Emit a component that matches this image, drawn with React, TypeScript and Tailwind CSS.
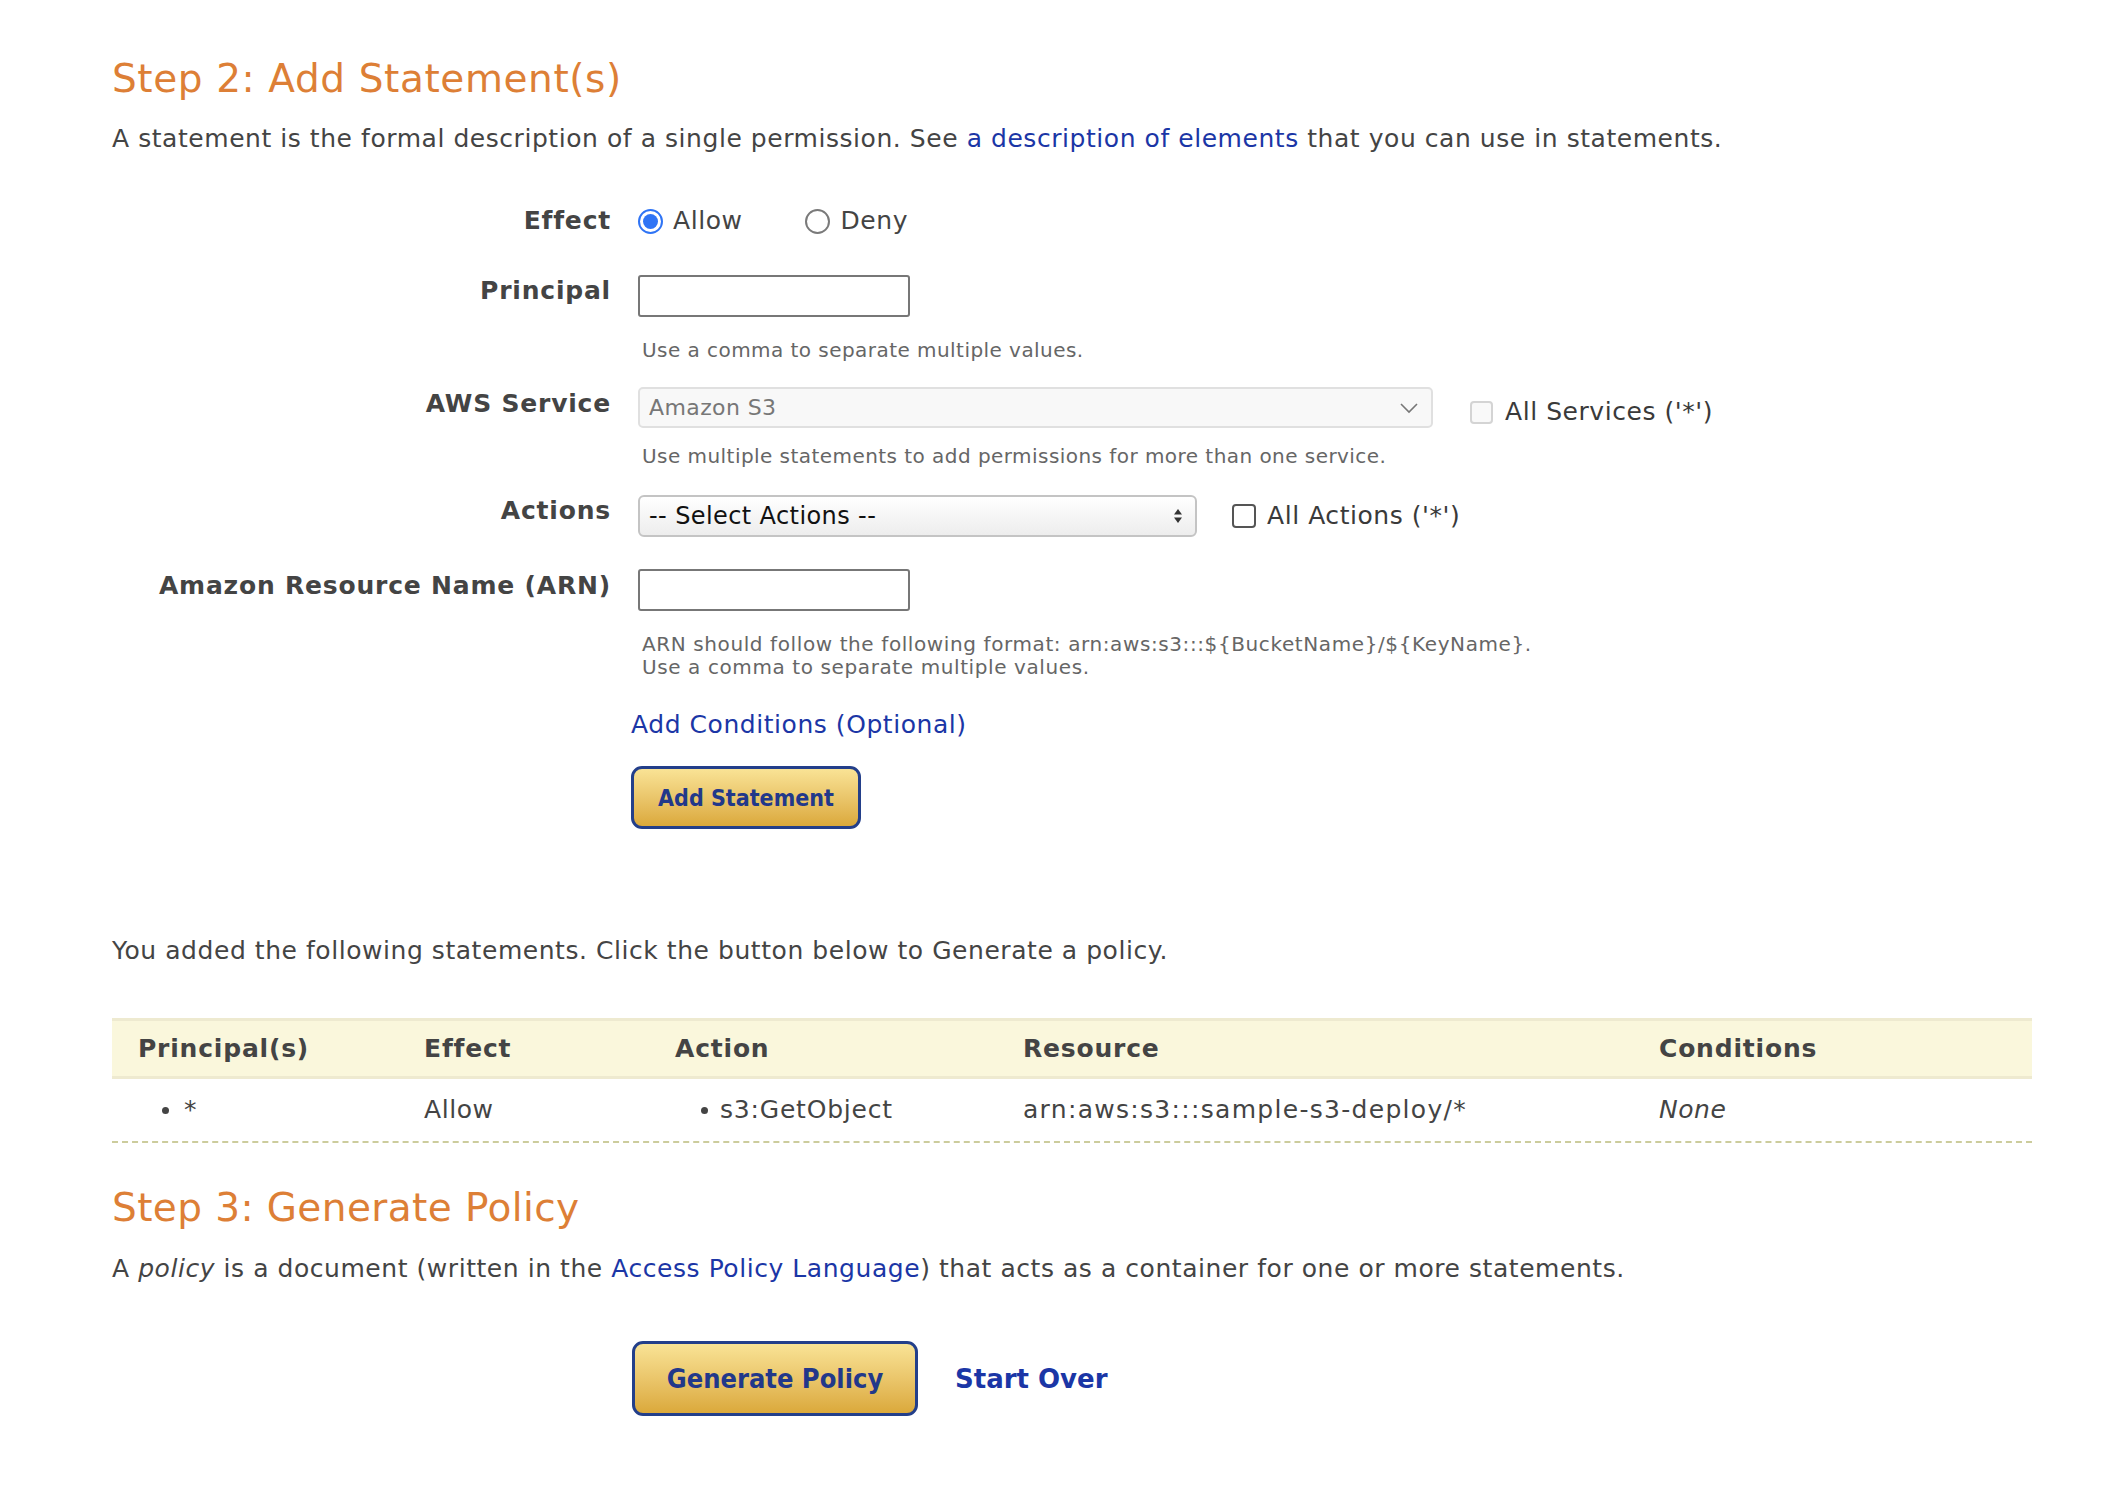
import React from "react";

const Radio = ({ checked }: { checked?: boolean }) =>
  checked ? (
    <span className="flex h-[25px] w-[25px] shrink-0 items-center justify-center rounded-full border-[2px] border-[#2f74f5] bg-white">
      <span className="block h-[15px] w-[15px] rounded-full bg-[#2f74f5]" />
    </span>
  ) : (
    <span className="block h-[25px] w-[25px] shrink-0 rounded-full border-[2px] border-[#7a7a7a] bg-white" />
  );

const body = "text-[25px] leading-[28px] tracking-[0.55px]";
const label = "text-[25px] font-bold leading-[28px] tracking-[0.8px]";
const hint = "text-[20px] leading-[24px] tracking-[0.45px] text-[#666]";
const btnFont = "font-['DejaVu_Sans_Condensed','DejaVu_Sans',sans-serif] font-stretch-condensed font-bold";

export default function App() {
  return (
    <div className="min-h-screen bg-white font-['DejaVu_Sans',Verdana,sans-serif] text-[#444]">
      <div className="pl-[112px] pr-[82px] pt-[57px] pb-[60px]">
        <h2 className="text-[39px] leading-[44px] tracking-[0.6px] text-[#dd7f36]">Step 2: Add Statement(s)</h2>
        <p className={`mt-[24px] ${body}`}>
          A statement is the formal description of a single permission. See{" "}
          <a className="text-[#1b36a6]">a description of elements</a> that you can use in statements.
        </p>

        <div className="grid grid-cols-[499px_1fr] gap-x-[27px]">
          {/* Effect */}
          <div className={`mt-[54px] flex h-[28px] items-center justify-end ${label}`}>Effect</div>
          <div className={`mt-[54px] flex h-[28px] items-center ${body}`}>
            <Radio checked />
            <span className="ml-[10px]">Allow</span>
            <span className="ml-[62px]"><Radio /></span>
            <span className="ml-[11px]">Deny</span>
          </div>

          {/* Principal */}
          <div className={`mt-[40px] pt-[2px] text-right ${label}`}>Principal</div>
          <div className="mt-[40px]">
            <div className="h-[42px] w-[272px] rounded-[3px] border-[2px] border-[#777] bg-white" />
            <div className={`mt-[21px] pl-[4px] ${hint}`}>Use a comma to separate multiple values.</div>
          </div>

          {/* AWS Service */}
          <div className={`mt-[25px] pt-[3px] text-right ${label}`}>AWS Service</div>
          <div className="mt-[25px]">
            <div className="flex items-start">
              <div className="flex h-[41px] w-[795px] items-center justify-between rounded-[5px] border-[2px] border-[#e0e0e0] bg-[#f8f8f8] pl-[9px] pr-[12px]">
                <span className="text-[22px] leading-[26px] tracking-[0.4px] text-[#777]">Amazon S3</span>
                <svg width="20" height="12" viewBox="0 0 20 12">
                  <polyline points="2,2 10,10 18,2" fill="none" stroke="#777" strokeWidth="1.6" />
                </svg>
              </div>
              <div className="ml-[37px] mt-[11px] flex h-[28px] items-center">
                <span className="block h-[23px] w-[23px] shrink-0 rounded-[4px] border-[2px] border-[#d4d4d4] bg-[#f9f9f9]" />
                <span className={`ml-[12px] ${body} text-[#3a3a3a]`}>All Services ('*')</span>
              </div>
            </div>
            <div className={`mt-[16px] pl-[4px] ${hint}`}>
              Use multiple statements to add permissions for more than one service.
            </div>
          </div>

          {/* Actions */}
          <div className={`mt-[27px] pt-[2px] text-right ${label}`}>Actions</div>
          <div className="mt-[27px] flex items-center">
            <div className="flex h-[42px] w-[559px] shrink-0 items-center justify-between rounded-[6px] border-[2px] border-[#c4c4c4] bg-gradient-to-b from-white to-[#ededed] pl-[9px] pr-[12px]">
              <span className="text-[24px] leading-[28px] tracking-[0.4px] text-[#111]">-- Select Actions --</span>
              <svg width="10" height="16" viewBox="0 0 10 16">
                <polygon points="5,1 9,6.5 1,6.5" fill="#333" />
                <polygon points="5,15 9,9.5 1,9.5" fill="#333" />
              </svg>
            </div>
            <span className="ml-[35px] block h-[24px] w-[24px] shrink-0 rounded-[4px] border-[2px] border-[#555] bg-white" />
            <span className={`ml-[11px] ${body} text-[#3a3a3a]`}>All Actions ('*')</span>
          </div>

          {/* ARN */}
          <div className={`mt-[32px] pt-[3px] text-right ${label}`}>Amazon Resource Name (ARN)</div>
          <div className="mt-[32px]">
            <div className="h-[42px] w-[272px] rounded-[3px] border-[2px] border-[#777] bg-white" />
            <div className="mt-[22px] pl-[4px] text-[20px] leading-[23px] tracking-[0.6px] text-[#666]">
              ARN should follow the following format: arn:aws:s3:::${"{"}BucketName{"}"}/${"{"}KeyName{"}"}.
              <br />
              Use a comma to separate multiple values.
            </div>
          </div>

          <div />
          <div className="-ml-[7px]">
            <a className={`mt-[32px] block ${body} text-[#1b36a6]`}>Add Conditions (Optional)</a>
            <button className={`mt-[27px] flex h-[63px] w-[230px] items-center justify-center rounded-[11px] border-[3px] border-[#233f8a] bg-gradient-to-b from-[#f9e395] to-[#dba93a] text-[23px] leading-[28px] text-[#22388a] ${btnFont}`}>
              Add Statement
            </button>
          </div>
        </div>

        <p className={`mt-[108px] ${body}`}>
          You added the following statements. Click the button below to Generate a policy.
        </p>

        <div className="mt-[53px]">
          <div className={`grid h-[61px] grid-cols-[285px_251px_348px_636px_1fr] items-center border-y-[3px] border-[#eeead0] bg-[#faf7dc] ${label}`}>
            <div className="pl-[26px]">Principal(s)</div>
            <div className="pl-[27px]">Effect</div>
            <div className="pl-[27px]">Action</div>
            <div className="pl-[27px]">Resource</div>
            <div className="pl-[27px]">Conditions</div>
          </div>
          <div className={`grid h-[64px] grid-cols-[285px_251px_348px_636px_1fr] items-center border-b-[2px] border-dashed border-[#cccc9c] ${body}`}>
            <div className="flex items-center pl-[50px]">
              <span className="block h-[7px] w-[7px] rounded-full bg-[#444]" />
              <span className="ml-[15px]">*</span>
            </div>
            <div className="pl-[27px]">Allow</div>
            <div className="flex items-center pl-[53px]">
              <span className="block h-[7px] w-[7px] rounded-full bg-[#444]" />
              <span className="ml-[12px] tracking-[0.8px]">s3:GetObject</span>
            </div>
            <div className="pl-[27px] tracking-[1.3px]">arn:aws:s3:::sample-s3-deploy/*</div>
            <div className="pl-[27px] italic">None</div>
          </div>
        </div>

        <h2 className="mt-[43px] text-[39px] leading-[44px] tracking-[0.4px] text-[#dd7f36]">Step 3: Generate Policy</h2>
        <p className={`mt-[25px] ${body}`}>
          A <i>policy</i> is a document (written in the <a className="text-[#1b36a6]">Access Policy Language</a>) that acts as a container for one or more statements.
        </p>

        <div className="mt-[58px] flex items-center pl-[520px]">
          <button className={`flex h-[75px] w-[286px] items-center justify-center rounded-[11px] border-[3px] border-[#233f8a] bg-gradient-to-b from-[#f9e395] to-[#dba93a] text-[27px] leading-[32px] text-[#22388a] ${btnFont}`}>
            Generate Policy
          </button>
          <a className="ml-[37px] text-[26px] font-bold leading-[30px] text-[#1b36a6]">Start Over</a>
        </div>
      </div>
    </div>
  );
}
